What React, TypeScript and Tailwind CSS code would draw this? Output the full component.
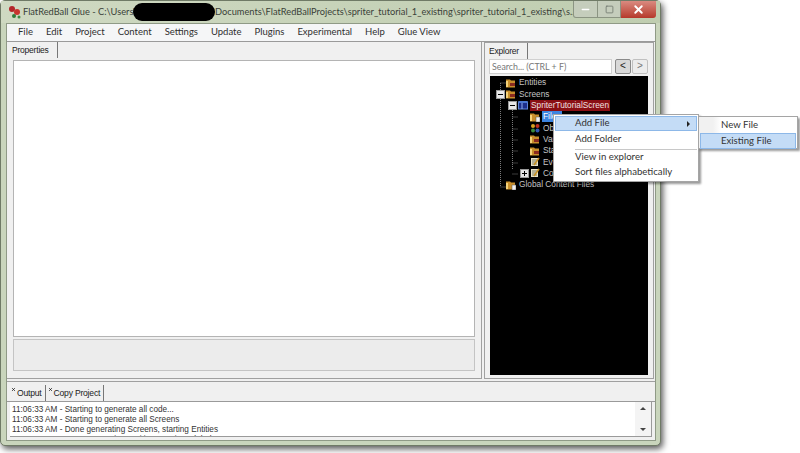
import { X, Minus, Square } from 'lucide-react';

const menuItems = ['File', 'Edit', 'Project', 'Content', 'Settings', 'Update', 'Plugins', 'Experimental', 'Help', 'Glue View'];

const logLines = [
  '11:06:33 AM - Starting to generate all code...',
  '11:06:33 AM - Starting to generate all Screens',
  '11:06:33 AM - Done generating Screens, starting Entities',
  '11:06:33 AM - Done generating Entities, starting Global Content',
];

type TreeRow = {
  label: string;
  depth: number;
  icon: 'folder' | 'screen' | 'object' | 'script' | 'file';
  expander?: 'minus' | 'plus';
  selected?: 'red' | 'blue';
};

const treeRows: TreeRow[] = [
  { label: 'Entities', depth: 0, icon: 'folder' },
  { label: 'Screens', depth: 0, icon: 'folder', expander: 'minus' },
  { label: 'SpriterTutorialScreen', depth: 1, icon: 'screen', expander: 'minus', selected: 'red' },
  { label: 'Files', depth: 2, icon: 'file', selected: 'blue' },
  { label: 'Objects', depth: 2, icon: 'object' },
  { label: 'Variables', depth: 2, icon: 'folder' },
  { label: 'States', depth: 2, icon: 'folder' },
  { label: 'Events', depth: 2, icon: 'script' },
  { label: 'Code', depth: 2, icon: 'script', expander: 'plus' },
  { label: 'Global Content Files', depth: 0, icon: 'file' },
];

function AppLogo() {
  return (
    <svg width="14" height="16" viewBox="0 0 14 16" className="shrink-0">
      <circle cx="4" cy="5" r="3" fill="#b3262a" />
      <circle cx="9" cy="8" r="3" fill="#c8352f" />
      <circle cx="6" cy="12" r="2" fill="#2f7a3a" />
      <circle cx="11" cy="13" r="1.5" fill="#3d8a45" />
    </svg>
  );
}

function TreeIcon({ icon }: { icon: TreeRow['icon'] }) {
  if (icon === 'screen') {
    return (
      <svg width="10" height="10" viewBox="0 0 10 10" className="shrink-0">
        <rect x="0.5" y="2" width="9" height="7" fill="#1c2f8a" stroke="#5d86d8" />
        <rect x="0.5" y="1" width="9" height="2" fill="#4a78d0" />
        <path d="M4 3v6" stroke="#8fb0ee" />
      </svg>
    );
  }
  if (icon === 'object') {
    return (
      <svg width="10" height="10" viewBox="0 0 10 10" className="shrink-0">
        <circle cx="3" cy="3" r="2" fill="#d8a020" />
        <circle cx="7.5" cy="3" r="2" fill="#c03020" />
        <circle cx="3" cy="7.5" r="2" fill="#3a8a3a" />
        <circle cx="7.5" cy="7.5" r="2" fill="#3058b0" />
      </svg>
    );
  }
  if (icon === 'script') {
    return (
      <svg width="10" height="10" viewBox="0 0 10 10" className="shrink-0">
        <rect x="1" y="1" width="7" height="8" fill="#e8e2c8" />
        <path d="M2 3h5M2 5h4M2 7h5" stroke="#7a7a60" />
        <path d="M9 1L4 8" stroke="#c89020" strokeWidth="1.5" />
      </svg>
    );
  }
  return (
    <svg width="10" height="10" viewBox="0 0 10 10" className="shrink-0">
      <path d="M0 1.5h4l1 1h4v7H0z" fill="#c98f2c" />
      <rect x="0" y="3" width="2" height="6" fill="#f4d27a" />
      {icon === 'folder' ? (
        <rect x="4" y="5" width="5" height="3" fill="#8a2a20" />
      ) : (
        <rect x="6" y="5" width="4" height="5" fill="#f2f2f2" stroke="#555" strokeWidth="0.5" />
      )}
    </svg>
  );
}

function Expander({ kind }: { kind?: 'minus' | 'plus' }) {
  if (!kind) return <span className="w-[9px] h-[9px] shrink-0" />;
  return (
    <span className="w-[9px] h-[9px] shrink-0 bg-[#e8e8e8] border border-[#9a9a9a] flex items-center justify-center relative">
      <span className="w-[5px] h-px bg-black" />
      {kind === 'plus' && <span className="absolute w-px h-[5px] bg-black" />}
    </span>
  );
}

function ExplorerTree() {
  return (
    <div className="flex-1 mx-[5px] bg-black pt-[1px] relative overflow-hidden font-['Liberation_Sans',sans-serif] text-[8.3px] text-[#c4c4c4]">
      {/* dotted connectors */}
      <svg width="60" height="120" className="absolute left-0 top-0">
        <path
          d="M10.5 7h5M10.5 7v104M10.5 111h5M22.5 30v64M22.5 41h5M22.5 53h5M22.5 64h5M22.5 75h5M22.5 87h5M22.5 98h5"
          stroke="#7a7a7a"
          strokeDasharray="1 1"
          fill="none"
        />
      </svg>
      {treeRows.map((row) => (
        <div key={row.label} className="h-[11.35px] flex items-center relative" style={{ paddingLeft: 6 + row.depth * 12 }}>
          <Expander kind={row.expander} />
          <span className="w-[1px] shrink-0" />
          <TreeIcon icon={row.icon} />
          <span
            className={
              row.selected === 'red'
                ? 'ml-[2px] px-[1px] bg-[#8a0f14] text-[#f0e0e0] leading-[11px]'
                : row.selected === 'blue'
                  ? 'ml-[2px] px-[1px] bg-[#3c84e0] text-white leading-[11px]'
                  : 'ml-[3px] leading-[11px]'
            }
          >
            {row.label}
          </span>
        </div>
      ))}
    </div>
  );
}

function ContextMenus() {
  return (
    <div className="absolute left-[553px] top-[114px] font-['Lato',sans-serif] text-[9.6px] text-[#333]">
      <div className="w-[146px] h-[68px] bg-white border border-[#a5a5a5] shadow-[2px_2px_2px_rgba(0,0,0,0.4)] py-[1px] px-[1px] relative">
        <div className="h-[15px] bg-[#c4dcf6] border border-[#8db8e8] flex items-center pl-[19px] pr-[6px] justify-between">
          <span>Add File</span>
          <span className="w-0 h-0 border-y-[3px] border-y-transparent border-l-[3px] border-l-[#222]" />
        </div>
        <div className="h-[16px] flex items-center pl-[20px]">Add Folder</div>
        <div className="h-px bg-[#c8c8c8] ml-[20px] mt-[2px]" />
        <div className="h-[15px] flex items-center pl-[20px]">View in explorer</div>
        <div className="h-[15px] flex items-center pl-[20px]">Sort files alphabetically</div>
      </div>
      <div className="absolute left-[145px] top-[2px] w-[100px] h-[33px] bg-[linear-gradient(90deg,#f1f1f1_0,#f1f1f1_14px,#fff_22px)] border border-[#a5a5a5] shadow-[2px_2px_2px_rgba(0,0,0,0.4)] px-[1px] pt-[1px]">
        <div className="h-[15px] flex items-center pl-[21px]">New File</div>
        <div className="h-[16px] bg-[#c4dcf6] border border-[#8db8e8] flex items-center pl-[20px]">Existing File</div>
      </div>
    </div>
  );
}

function TabButton({ label, closable }: { label: string; closable?: boolean }) {
  return (
    <div className={closable ? 'h-[16px] flex items-start border-r border-[#777] pr-[3px] pl-[1px] leading-[16px]' : 'h-[16px] flex items-start border-r border-[#777] pr-[8px] pl-[1px] leading-[16px]'}>
      {closable && <X size={5} strokeWidth={3} className="mt-[2px] mr-[1px] text-black" />}
      <span>{label}</span>
    </div>
  );
}

export default function App() {
  return (
    <div className="relative w-[800px] h-[453px] bg-white overflow-hidden">
      {/* window */}
      <div className="w-[661px] h-[446px] rounded-[5px] bg-[#c9d5bc] shadow-[2px_3px_6px_rgba(0,0,0,0.65)] border border-[#6f7a66] flex flex-col font-['Liberation_Sans',sans-serif] text-[#222]">
        {/* title bar */}
        <div className="h-[22px] shrink-0 flex items-center pl-[7px] bg-gradient-to-r from-[#cfd9c2] to-[#bfcdb0] relative">
          <AppLogo />
          <div className="ml-[1px] flex items-center font-['Lato',sans-serif] text-[9.25px] text-[#3a3f38] whitespace-nowrap">
            <span className="w-[110px]">FlatRedBall Glue - C:\Users\</span>
            <span className="w-[82px] h-[18px] bg-black rounded-full" />
            <span>Documents\FlatRedBallProjects\spriter_tutorial_1_existing\spriter_tutorial_1_existing\s...</span>
          </div>
          {/* caption buttons */}
          <div className="absolute right-[4px] top-0 flex h-[17px]">
            <div className="w-[25px] border border-t-0 border-[#8b9482] rounded-bl-[3px] bg-[#c5cdbc] flex items-center justify-center">
              <Minus size={11} strokeWidth={3} className="text-white" />
            </div>
            <div className="w-[23px] border border-t-0 border-l-0 border-[#8b9482] bg-[#c5cdbc] flex items-center justify-center">
              <Square size={9} strokeWidth={2} className="text-[#6a7268]" />
            </div>
            <div className="w-[35px] rounded-br-[3px] bg-gradient-to-b from-[#d98a80] to-[#b5372a] flex items-center justify-center">
              <X size={13} strokeWidth={3.5} className="text-white" />
            </div>
          </div>
        </div>

        {/* client area */}
        <div className="ml-[5px] mr-[4px] h-[418px] border border-[#8f9a86] bg-[#f0f0f0] flex flex-col">
          {/* menu */}
          <div className="h-[18px] shrink-0 bg-[#f5f6f7] border-b border-[#9a9a9a] flex items-center pl-[11px] gap-[13px] font-['Lato',sans-serif] text-[9.5px] text-[#2f2f2f]">
            {menuItems.map((item) => (
              <span key={item}>{item}</span>
            ))}
          </div>

          <div className="h-[337px] shrink-0 flex gap-[2px] pr-[1px]">
            {/* properties panel */}
            <div className="w-[480px] border-r border-[#a0a0a0] flex flex-col">
              <div className="h-[18px] flex text-[8.5px] tracking-tight pl-[4px]">
                <TabButton label="Properties" />
              </div>
              <div className="flex-1 flex flex-col px-[6px] pb-[7px] gap-[2px] border-b border-[#a0a0a0]">
                <div className="h-[277px] bg-white border border-[#b4b4b4]" />
                <div className="flex-1 bg-[#ececec] border border-[#c4c4c4]" />
              </div>
            </div>
            {/* explorer panel */}
            <div className="flex-1 border-l border-r border-[#a0a0a0] flex flex-col border-t">
              <div className="h-[16px] flex text-[8.5px] tracking-tight pl-[3px]">
                <TabButton label="Explorer" />
              </div>
              <div className="h-[17px] flex items-start pl-[4px] pr-[5px]">
                <div className="w-[123px] h-[15px] mr-[3px] bg-white border border-[#d0d0d0] font-['Lato',sans-serif] text-[8.8px] text-[#777] pl-[2px] leading-[13px]">
                  Search... (CTRL + F)
                </div>
                <div className="w-[16px] h-[15px] mr-[1px] bg-[#d8d8d8] border border-[#8a8a8a] rounded-[2px] text-[10px] text-center leading-[12px]">
                  &lt;
                </div>
                <div className="w-[16px] h-[15px] bg-[#ececec] border border-[#c0c0c0] rounded-[2px] text-[10px] text-[#777] text-center leading-[12px]">
                  &gt;
                </div>
              </div>
              <ExplorerTree />
              <div className="h-[4px] shrink-0 border-b border-[#a0a0a0]" />
            </div>
          </div>

          {/* output */}
          <div className="flex-1 flex flex-col border-t border-[#a0a0a0] mt-[2px] pt-[3px]">
            <div className="h-[17px] shrink-0 flex text-[8.6px] tracking-tight pl-[3px] gap-[1px] border-b border-[#9a9a9a]">
              <TabButton label="Output" closable />
              <TabButton label="Copy Project" closable />
            </div>
            <div className="mx-[3px] h-[35px] bg-white border-b border-r border-[#9a9a9a] flex justify-between overflow-hidden">
              <div className="pl-[2px] pt-[3px] text-[8.2px] leading-[10px] text-[#333] whitespace-nowrap overflow-hidden">
                {logLines.map((line, i) => (
                  <div key={i}>{line}</div>
                ))}
              </div>
              <div className="w-[16px] shrink-0 bg-[#f4f4f4] flex flex-col items-center justify-between py-[5px]">
                <span className="w-0 h-0 border-x-[3px] border-x-transparent border-b-[3px] border-b-[#444]" />
                <span className="w-0 h-0 border-x-[3px] border-x-transparent border-t-[3px] border-t-[#444]" />
              </div>
            </div>
          </div>
        </div>
      </div>

      <ContextMenus />
    </div>
  );
}
